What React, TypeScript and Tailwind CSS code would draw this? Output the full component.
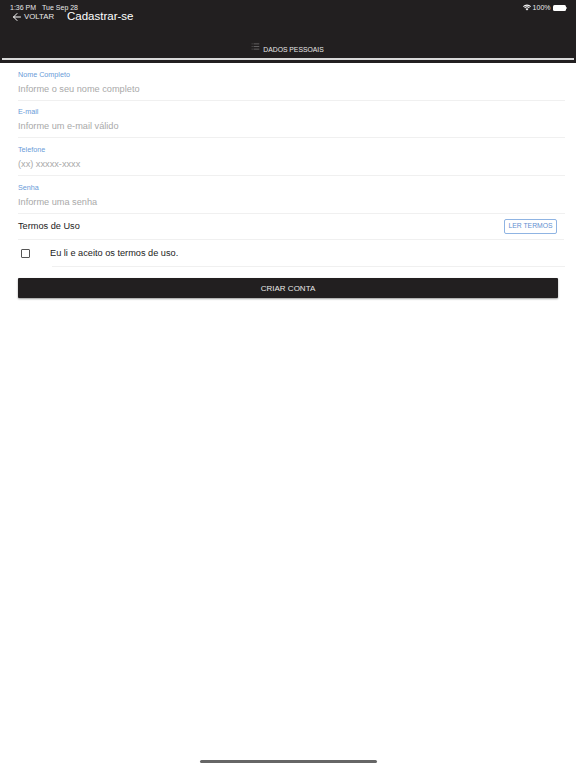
import React from 'react';
import { ArrowLeft, List } from 'lucide-react';

const fields = [
  { label: 'Nome Completo', placeholder: 'Informe o seu nome completo', height: 'h-[37px]' },
  { label: 'E-mail', placeholder: 'Informe um e-mail válido', height: 'h-[37px]' },
  { label: 'Telefone', placeholder: '(xx) xxxxx-xxxx', height: 'h-[38px]' },
  { label: 'Senha', placeholder: 'Informe uma senha', height: 'h-[38px]' },
];

const WifiIcon = () => (
  <svg width="8" height="7" viewBox="0 0 18 14" fill="#fff">
    <path d="M9 14 L5.8 10.4 A4.6 4.6 0 0 1 12.2 10.4 Z" />
    <path d="M4.4 8.9 L2.9 7.2 A8.8 8.8 0 0 1 15.1 7.2 L13.6 8.9 A6.6 6.6 0 0 0 4.4 8.9 Z" />
    <path d="M1.6 5.8 L0 4 A13 13 0 0 1 18 4 L16.4 5.8 A10.6 10.6 0 0 0 1.6 5.8 Z" />
  </svg>
);

const Field = ({ label, placeholder, height }: { label: string; placeholder: string; height: string }) => (
  <div className={`${height} flex flex-col justify-end border-b border-[#f0f0f0]`}>
    <div className="text-[7.2px] leading-[10px] text-[#6a9bd8]">{label}</div>
    <div className="mt-[3px] mb-[5px] text-[9.2px] leading-[12px] text-[#a9a9a9]">{placeholder}</div>
  </div>
);

export default function App() {
  return (
    <div className="relative h-[768px] w-[576px] overflow-hidden bg-white font-['Liberation_Sans',sans-serif]">
      <header className="flex h-[63px] flex-col bg-[#221f20] text-white">
        <div className="flex h-[12px] items-center justify-between pl-[10px] pr-[9px] pt-[3px] text-[7px] leading-none text-[#e8e8e8]">
          <div className="flex gap-[6px]">
            <span>1:36 PM</span>
            <span>Tue Sep 28</span>
          </div>
          <div className="flex items-center">
            <WifiIcon />
            <span className="ml-[2px]">100%</span>
            <div className="ml-[2px] flex items-center">
              <div className="h-[6px] w-[13px] rounded-[1.5px] bg-white" />
              <div className="ml-[0.5px] h-[2px] w-[1px] bg-[#999999]" />
            </div>
          </div>
        </div>
        <div className="flex h-[10px] items-center pl-[11px]">
          <ArrowLeft size={12} strokeWidth={2} className="text-white" />
          <span className="ml-[1px] w-[43px] text-[7.8px] text-[#e8e8e8]">VOLTAR</span>
          <span className="text-[11.5px] text-white">Cadastrar-se</span>
        </div>
        <div className="mt-[21px] flex h-[14px] items-center justify-center gap-[3px] pr-[1px]">
          <List size={9} strokeWidth={1} className="mb-[8px] text-[#cccccc]" />
          <span className="text-[6.8px] text-[#e8e8e8]">DADOS PESSOAIS</span>
        </div>
        <div className="mx-[2px] mt-[1px] h-[2px] bg-[#d8d8d8]" />
      </header>

      <main className="px-[18px] pt-[1px]">
        <div className="mr-[-7px] flex flex-col">
          {fields.map((f) => (
            <Field key={f.label} {...f} />
          ))}
          <div className="mr-[1px] flex h-[26px] items-center justify-between border-b border-[#f0f0f0] pr-[7px]">
            <span className="text-[9.2px] text-[#222222]">Termos de Uso</span>
            <button className="flex h-[15px] w-[53px] items-center justify-center rounded-[2px] border border-[#8fb4e3] text-[6.8px] text-[#5f8fd0]">
              LER TERMOS
            </button>
          </div>
          <div className="flex h-[26px] items-center pl-[3px]">
            <div className="h-[9px] w-[9px] rounded-[1px] border border-[#555555]" />
            <span className="ml-[20px] pt-[2px] text-[9.2px] text-[#222222]">Eu li e aceito os termos de uso.</span>
          </div>
          <div className="ml-[34px] h-px bg-[#f0f0f0]" />
        </div>
        <button className="mt-[11px] flex h-[20px] w-[540px] items-center justify-center rounded-[1px] bg-[#221f20] pt-[1px] text-[8px] text-[#e8e8e8] shadow-[0_1px_2px_rgba(0,0,0,0.4)]">
          CRIAR CONTA
        </button>
      </main>

      <div className="absolute bottom-[5px] left-[200px] h-[3px] w-[177px] rounded-full bg-[#666666]" />
    </div>
  );
}
